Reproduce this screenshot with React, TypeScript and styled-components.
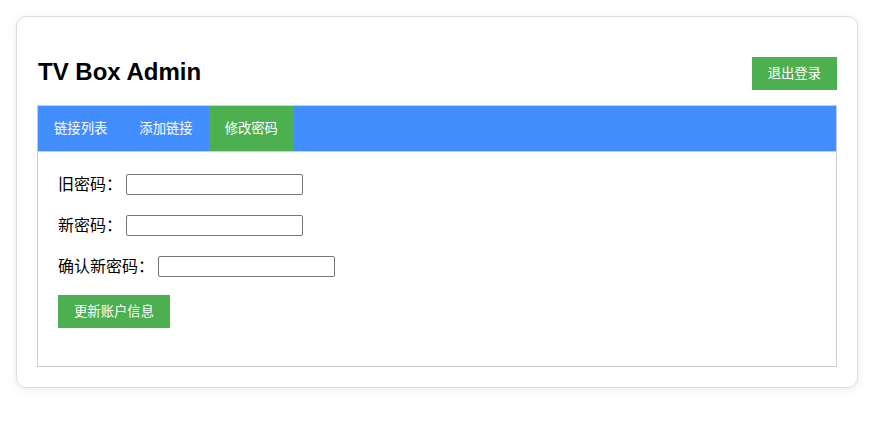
import React, { FC, useState } from "react";
import styled, { createGlobalStyle, css } from "styled-components";

const GlobalStyle = createGlobalStyle`
  body {
    margin: 0;
    background: #fff;
    font-family: "Liberation Sans", Arial, "Noto Sans CJK SC", sans-serif;
    color: #000;
  }
`;

type TabProps = {
  active?: boolean;
};

const tabs = ["链接列表", "添加链接", "修改密码"];
const fields = ["旧密码：", "新密码：", "确认新密码："];

const App: FC = () => {
  const [current, setCurrent] = useState(2);

  return (
    <React.Fragment>
      <GlobalStyle />
      <Card>
        <Header>
          <Title>TV Box Admin</Title>
          <GreenButton>退出登录</GreenButton>
        </Header>

        <TabBox>
          <TabBar>
            {tabs.map((t, i) => (
              <Tab key={t} active={i === current} onClick={() => setCurrent(i)}>
                {t}
              </Tab>
            ))}
          </TabBar>

          <TabContent>
            {fields.map((f) => (
              <Row key={f}>
                <Label>{f}</Label>
                <Input type="password" />
              </Row>
            ))}
            <GreenButton>更新账户信息</GreenButton>
          </TabContent>
        </TabBox>
      </Card>
    </React.Fragment>
  );
};

export default App;

const Card = styled.div`
  box-sizing: border-box;
  width: 842px;
  margin: 16px;
  padding: 0 20px 20px;
  background: #fff;
  border: 1px solid #ddd;
  border-radius: 10px;
  box-shadow: 0 2px 8px rgba(0, 0, 0, 0.08);
`;

const Header = styled.div`
  display: flex;
  justify-content: space-between;
  align-items: center;
  padding-top: 40px;
  margin-bottom: 15px;
`;

const Title = styled.h1`
  margin: 0 0 3px 1px;
  font-size: 24px;
  line-height: 28px;
  font-weight: bold;
`;

const GreenButton = styled.button`
  align-self: flex-start;
  border: none;
  margin: 0;
  padding: 8px 16px;
  background: #4caf50;
  color: #fff;
  font-family: "Liberation Sans", Arial, "Noto Sans CJK SC", sans-serif;
  font-size: 13.333px;
  line-height: 17px;
  cursor: pointer;
`;

const TabBox = styled.div`
  border: 1px solid #ccc;
`;

const TabBar = styled.div`
  display: flex;
  background: #428eff;
  border-bottom: 1px solid #ccc;
`;

const Tab = styled.button<TabProps>`
  border: none;
  margin: 0;
  padding: 15px 16px;
  background: transparent;
  color: #fff;
  font-family: "Liberation Sans", Arial, "Noto Sans CJK SC", sans-serif;
  font-size: 13.333px;
  line-height: 15px;
  cursor: pointer;

  ${(props) =>
    props.active &&
    css`
      background: #4caf50;
    `}
`;

const TabContent = styled.div`
  display: flex;
  flex-direction: column;
  align-items: flex-start;
  padding: 22px 20px 38px;
`;

const Row = styled.div`
  display: flex;
  align-items: center;
  height: 21px;
  margin-bottom: 20px;

  &:nth-of-type(3) {
    margin-bottom: 18px;
  }
`;

const Label = styled.label`
  font-size: 16px;
  line-height: 20px;
  margin-right: 4px;
`;

const Input = styled.input`
  box-sizing: border-box;
  width: 177px;
  height: 21px;
  margin: 0;
  padding: 1px 2px;
  border: 1px solid #767676;
  border-radius: 2px;
  font-size: 13.333px;
`;
